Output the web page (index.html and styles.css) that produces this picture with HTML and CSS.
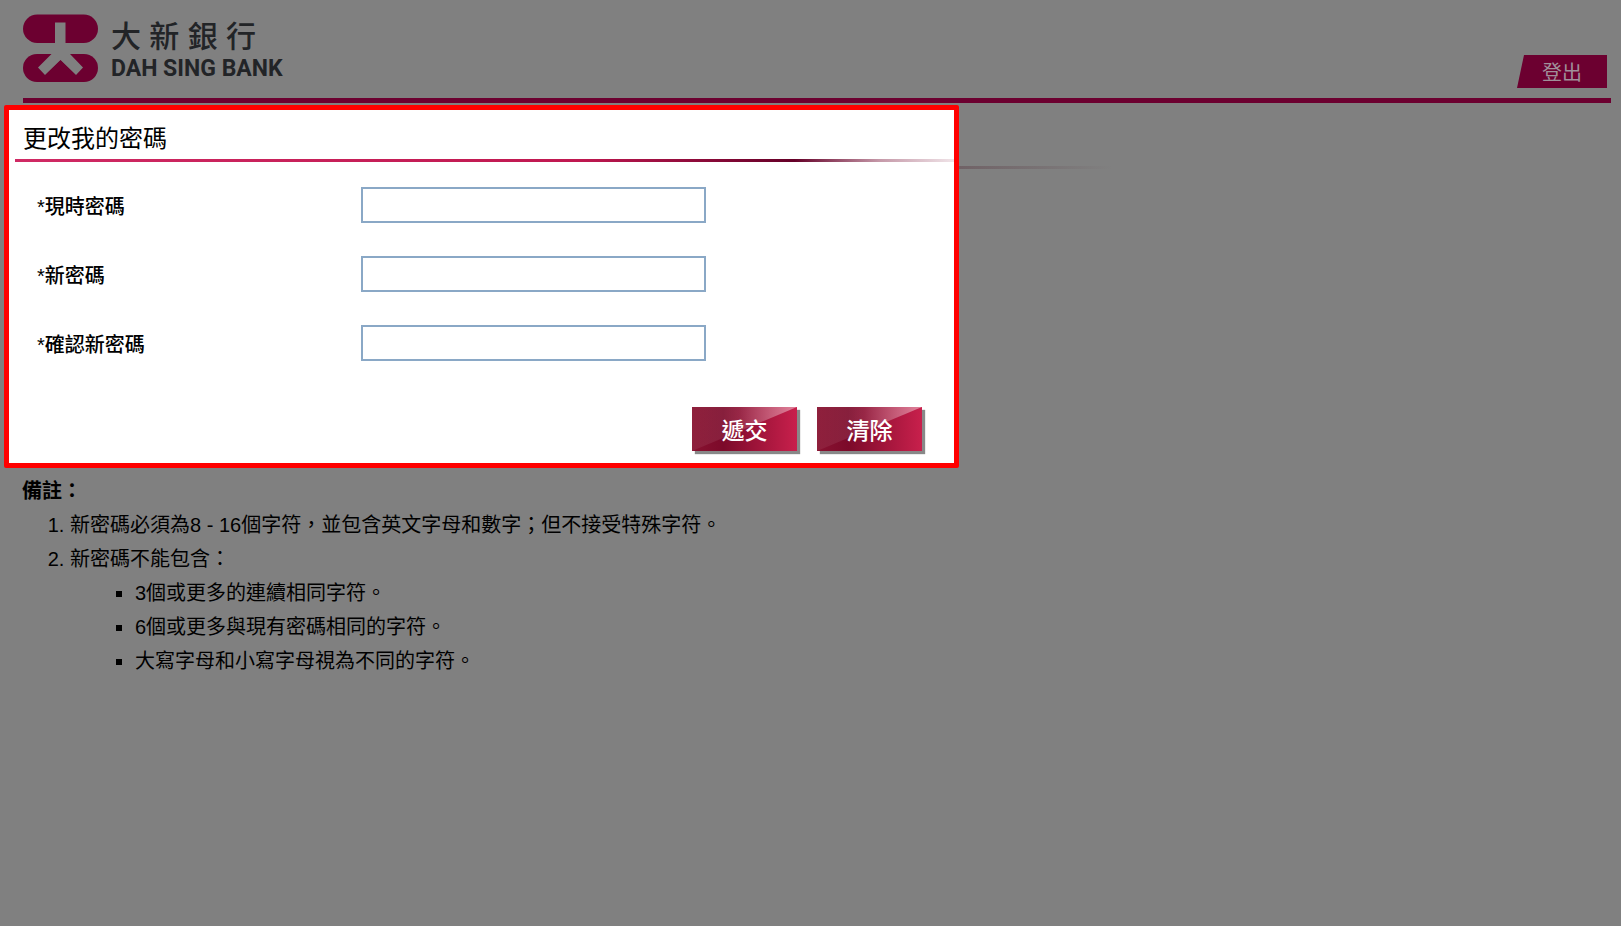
FILE: index.html
```html
<!DOCTYPE html>
<html lang="zh-Hant">
<head>
    <meta charset="utf-8">
    <title>更改我的密碼</title>
    <link rel="stylesheet" href="styles.css">
</head>
<body>
    <header class="header">
        <div class="brand">
            <svg class="logo" viewBox="0 0 76 70" aria-hidden="true">
                <rect x="0" y="0.5" width="75" height="28.500" rx="14.250" fill="#6c0030"/>
                <rect x="0" y="40" width="75" height="28" rx="14" fill="#6c0030"/>
                <path d="M32 8.5H42.500V29L47 40L60 53.500L53 61L37.500 46L22 61L15 53.500L28.500 40L32 29Z" fill="#808080"/>
                <path d="M37.500 46.500L53 61.500H22Z" fill="#6c0030"/>
            </svg>
            <div class="brand-text">
                <div class="brand-zh">大 新 銀 行</div>
                <div class="brand-en">DAH SING BANK</div>
            </div>
        </div>
        <button type="button" class="logout">登出</button>
    </header>

    <main>
        <div class="top">
            <form class="panel">
                <h1>更改我的密碼</h1>

                <div class="form-group">
                    <label for="currentPassword">*現時密碼</label>
                    <input type="password" id="currentPassword" required>
                </div>

                <div class="form-group">
                    <label for="newPassword">*新密碼</label>
                    <input type="password" id="newPassword" required>
                </div>

                <div class="form-group">
                    <label for="confirmPassword">*確認新密碼</label>
                    <input type="password" id="confirmPassword" required>
                </div>

                <div class="btn-container">
                    <button type="submit" class="btn"><span>遞交</span></button>
                    <button type="reset" class="btn"><span>清除</span></button>
                </div>
            </form>
            <div class="fade-line"></div>
        </div>

        <section class="notes">
            <h2>備註：</h2>
            <ol>
                <li>新密碼必須為8 - 16個字符，並包含英文字母和數字；但不接受特殊字符。</li>
                <li>新密碼不能包含：
                    <ul>
                        <li>3個或更多的連續相同字符。</li>
                        <li>6個或更多與現有密碼相同的字符。</li>
                        <li>大寫字母和小寫字母視為不同的字符。</li>
                    </ul>
                </li>
            </ol>
        </section>
    </main>
</body>
</html>
```

FILE: styles.css
```css
* {
    box-sizing: border-box;
}

body {
    margin: 0;
    background-color: #808080;
    color: #000;
    font-family: "Liberation Sans", "Noto Sans CJK TC", sans-serif;
    font-size: 20px;
}

.header {
    display: flex;
    justify-content: space-between;
    align-items: flex-end;
    margin: 0 10px 0 23px;
    padding-top: 14px;
    border-bottom: 5px solid #6c0030;
}

.brand {
    display: flex;
    gap: 12px;
    padding-bottom: 13px;
}

.logo {
    width: 76px;
    height: 70px;
}

.brand-text {
    color: #222427;
    padding-top: 7px;
}

.brand-zh {
    font-size: 30px;
    font-weight: 500;
    line-height: 32px;
}

.brand-en {
    font-family: Roboto, sans-serif;
    font-size: 23px;
    font-weight: 700;
    line-height: 32px;
}

.logout {
    width: 90px;
    height: 33px;
    margin: 0 4px 10px 0;
    padding: 0;
    border: none;
    background-color: #6c0030;
    color: #a0909a;
    clip-path: polygon(7px 0, 100% 0, 100% 100%, 0 100%);
    font-family: inherit;
    font-size: 20px;
    cursor: pointer;
}

.top {
    display: flex;
    margin: 2px 0 0 4px;
}

.panel {
    flex: 0 1 955px;
    padding-bottom: 12px;
    background-color: #fff;
    border: 5px solid #f00;
    border-radius: 2px;
}

.panel h1 {
    margin: 0 0 25px 6px;
    padding: 12px 8px 6px;
    font-size: 24px;
    font-weight: 400;
    line-height: 34px;
    background: linear-gradient(to right, #d02a64, #c01850 60%, #650028 83%, #c598a8 92%, #f0e4e8) bottom / 100% 3px no-repeat;
}

.form-group {
    display: flex;
    align-items: center;
    margin: 0 28px 33px;
}

.form-group label {
    flex: 0 0 324px;
    font-weight: 500;
}

.form-group input {
    flex: 0 1 345px;
    min-width: 0;
    height: 36px;
    padding: 0 8px;
    border: 2px solid #8aa8c6;
    background-color: #fff;
    font-size: 20px;
}

.btn-container {
    display: flex;
    justify-content: flex-end;
    gap: 20px;
    padding: 13px 32px 0 0;
}

.btn {
    position: relative;
    width: 105px;
    height: 44px;
    padding: 0;
    border: none;
    background: linear-gradient(to right, #881230, #7c0a2a 30%, #c8204c);
    box-shadow: 3px 3px 1px #888;
    color: #fff;
    font-family: inherit;
    font-size: 23px;
    font-weight: 500;
    cursor: pointer;
}

/* glossy upper left half */
.btn::before {
    content: "";
    position: absolute;
    inset: 0;
    background: linear-gradient(to right, rgba(255, 255, 255, 0.06), rgba(255, 255, 255, 0.1) 45%, rgba(255, 255, 255, 0.45));
    clip-path: polygon(0 0, 100% 0, 0 100%);
}

.btn span {
    position: relative;
}

.fade-line {
    flex: 0 1 180px;
    height: 3px;
    margin-top: 61px;
    background: linear-gradient(to right, #706266, #808080 85%);
}

.notes {
    padding: 6px 22px;
    line-height: 34px;
}

.notes h2 {
    margin: 0;
    font-size: 20px;
    font-weight: 700;
}

.notes ol {
    margin: 0;
    padding-left: 48px;
}

.notes ul {
    margin: 0;
    padding-left: 65px;
    list-style: square;
}
```
